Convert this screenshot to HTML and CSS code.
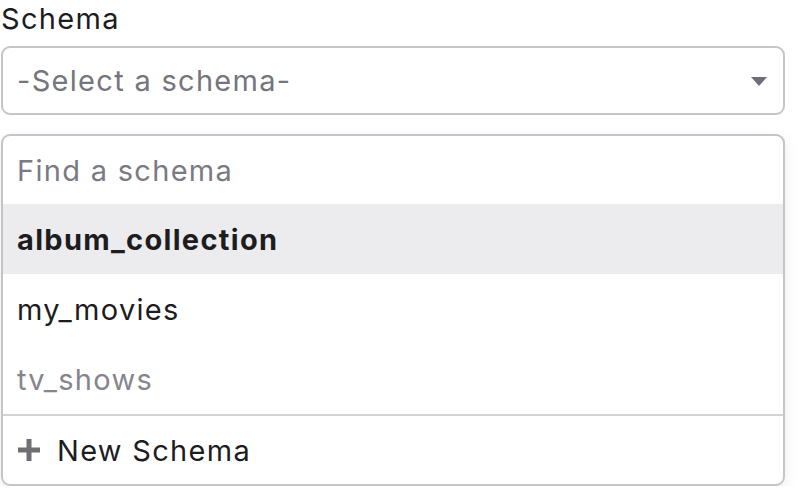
FILE: index.html
```html
<!DOCTYPE html>
<html>
<head>
<meta charset="utf-8">
<link rel="stylesheet" href="styles.css">
</head>
<body>
<div class="field">
  <div class="label">Schema</div>
  <div class="select">
    <span class="select-text">-Select a schema-</span>
    <svg class="caret" width="16" height="10" viewBox="0 0 16 10"><path d="M0 0H16L8 9Z" fill="#6e6e78"/></svg>
  </div>
  <div class="menu">
    <div class="row search">Find a schema</div>
    <div class="row active">album_collection</div>
    <div class="row">my_movies</div>
    <div class="row disabled">tv_shows</div>
    <div class="row new">
      <svg class="plus" width="24" height="24" viewBox="0 0 24 24"><path d="M12 1V23M1 12H23" stroke="#6e6e73" stroke-width="5"/></svg>
      <span>New Schema</span>
    </div>
  </div>
</div>
</body>
</html>
```
FILE: styles.css
```css
html, body {
  margin: 0;
  padding: 0;
  background: #fff;
}
body {
  font-family: Inter, "Noto Sans", sans-serif;
  font-size: 29px;
  letter-spacing: 1.3px;
  color: #1d1d1f;
}
.field {
  width: 785px;
  display: flex;
  flex-direction: column;
}
.label {
  height: 46px;
  line-height: 38px;
  padding-left: 1px;
}
.select {
  margin-left: 1px;
  height: 69px;
  box-sizing: border-box;
  border: 2px solid #c4c4c9;
  border-radius: 9px;
  display: flex;
  align-items: center;
  justify-content: space-between;
  padding: 0 16px 0 14px;
}
.select-text {
  color: #75757e;
}
.caret {
  margin-top: 2px;
}
.menu {
  margin-top: 19px;
  margin-left: 1px;
  border: 2px solid #c4c4c9;
  border-radius: 9px;
  box-shadow: 0 4px 14px rgba(0,0,0,0.08);
  overflow: hidden;
  display: flex;
  flex-direction: column;
}
.row {
  height: 70px;
  display: flex;
  align-items: center;
  padding-left: 14px;
}
.search {
  color: #7a7a84;
  height: 68px;
}
.active {
  background: #ececee;
  font-weight: 700;
}
.disabled {
  color: #85858e;
}
.new {
  border-top: 2px solid #d2d2d7;
  height: 68px;
  gap: 16px;
}
```
